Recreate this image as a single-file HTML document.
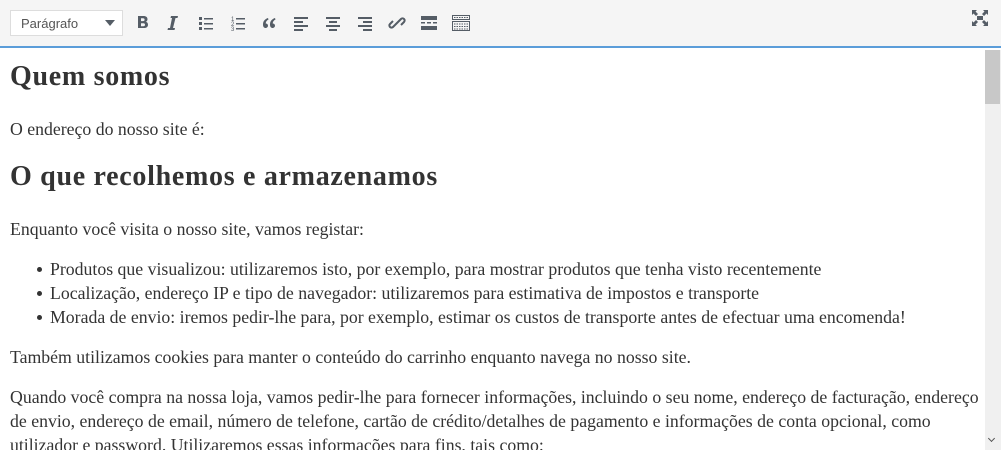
<!DOCTYPE html>
<html><head><meta charset="utf-8"><style>
*{margin:0;padding:0;box-sizing:border-box}
body{width:1001px;height:472px;background:#fff;overflow:hidden;position:relative;font-family:"Liberation Serif",serif;color:#333}
.tb{position:absolute;left:0;top:0;width:1001px;height:48px;background:#f5f5f5;border-bottom:2px solid #5b9dd9}
.sel{position:absolute;left:10px;top:10px;width:113px;height:26px;background:#fff;border:1px solid #ddd;font:13px "Liberation Sans",sans-serif;color:#555;padding:5px 0 0 10px}
.sel:after{content:"";position:absolute;right:7px;top:9px;border:5px solid transparent;border-top:6px solid #555d66;border-bottom:0}
.ic{position:absolute;top:13px}
.c{position:absolute;left:10px;top:50px;width:975px;white-space:nowrap}
h2{position:absolute;left:0;font-size:28px;font-weight:bold;letter-spacing:0.7px}
p,li{position:absolute;font-size:17.75px;line-height:24px}
li{list-style:none;left:40px}
li:before{content:"";position:absolute;left:-13px;top:10px;width:5px;height:5px;border-radius:50%;background:#333}
.sb{position:absolute;left:985px;top:50px;width:16px;height:400px;background:#f0f0f0}
.th{position:absolute;left:985px;top:50px;width:15px;height:54px;background:#c8c8c8}
</style></head><body>
<div class="tb">
<div class="sel">Parágrafo</div>
<svg class="ic" style="left:133px" width="20" height="20" viewBox="0 0 20 20" fill="#555d66"><path d="M5 3h5.5c2.5 0 4 1.2 4 3.2 0 1.3-.7 2.2-1.8 2.6 1.5.3 2.300 1.4 2.3 2.9 0 2.2-1.7 3.3-4.3 3.3H5zm3 2.3v2.8h2c1 0 1.6-.5 1.6-1.4s-.6-1.4-1.6-1.4zm0 5v3h2.3c1.1 0 1.7-.5 1.7-1.5s-.6-1.5-1.7-1.5z"/></svg>
<svg class="ic" style="left:163px" width="20" height="20" viewBox="0 0 20 20" fill="#555d66"><path d="M8 3h7l-.5 2h-2l-2.5 10h2l-.5 2h-7l.5-2h2L9 5H7.5z"/></svg>
<svg class="ic" style="left:196px" width="20" height="20" viewBox="0 0 20 20" fill="#555d66"><rect x="3" y="4" width="3" height="3"/><rect x="3" y="9" width="3" height="3"/><rect x="3" y="14" width="3" height="3"/><rect x="8" y="5" width="9" height="1.5"/><rect x="8" y="10" width="9" height="1.5"/><rect x="8" y="15" width="9" height="1.5"/></svg>
<svg class="ic" style="left:228px" width="20" height="20" viewBox="0 0 20 20" fill="#555d66"><text x="3" y="8" font-size="6" font-family="Liberation Sans">1</text><text x="3" y="13" font-size="6" font-family="Liberation Sans">2</text><text x="3" y="18" font-size="6" font-family="Liberation Sans">3</text><rect x="8" y="5" width="9" height="1.5"/><rect x="8" y="10" width="9" height="1.5"/><rect x="8" y="15" width="9" height="1.5"/></svg>
<svg class="ic" style="left:259px" width="20" height="20" viewBox="0 0 20 20" fill="#555d66"><path d="M9 5C6 6 4 8 4 11.5 4 14 5.3 15 6.5 15S9 14 9 12.7 8 10.5 6.7 10.5c.2-2 1-3 2.8-4zM16 5c-3 1-5 3-5 6.5 0 2.5 1.3 3.5 2.5 3.5S16 14 16 12.7 15 10.5 13.7 10.5c.2-2 1-3 2.8-4z"/></svg>
<svg class="ic" style="left:291px" width="20" height="20" viewBox="0 0 20 20" fill="#555d66"><rect x="3" y="4" width="14" height="2"/><rect x="3" y="8" width="9" height="2"/><rect x="3" y="12" width="14" height="2"/><rect x="3" y="16" width="9" height="2"/></svg>
<svg class="ic" style="left:323px" width="20" height="20" viewBox="0 0 20 20" fill="#555d66"><rect x="3" y="4" width="14" height="2"/><rect x="6" y="8" width="8" height="2"/><rect x="3" y="12" width="14" height="2"/><rect x="6" y="16" width="8" height="2"/></svg>
<svg class="ic" style="left:355px" width="20" height="20" viewBox="0 0 20 20" fill="#555d66"><rect x="3" y="4" width="14" height="2"/><rect x="8" y="8" width="9" height="2"/><rect x="3" y="12" width="14" height="2"/><rect x="8" y="16" width="9" height="2"/></svg>
<svg class="ic" style="left:387px" width="20" height="20" viewBox="0 0 20 20" fill="none" stroke="#555d66" stroke-width="2"><path d="M9 11l-3 3a2 2 0 0 1-3-3l3-3M11 9l3-3a2 2 0 0 1 3 3l-3 3M8 12l4-4"/></svg>
<svg class="ic" style="left:419px" width="20" height="20" viewBox="0 0 20 20" fill="#555d66"><rect x="2" y="3" width="16" height="4"/><rect x="2" y="9" width="4" height="1.5"/><rect x="8" y="9" width="4" height="1.5"/><rect x="14" y="9" width="4" height="1.5"/><rect x="2" y="13" width="16" height="4"/></svg>
<svg class="ic" style="left:451px" width="20" height="20" viewBox="0 0 20 20" fill="none" stroke="#555d66" stroke-width="1"><rect x="1.5" y="2.5" width="17" height="4"/><rect x="1.5" y="8.5" width="17" height="9"/><path d="M3 4.5h14M3 11h14M3 13.5h14M3 16h14" stroke-dasharray="1.5 1"/></svg>
<svg style="position:absolute;left:971px;top:9px" width="18" height="18" viewBox="0 0 18 18" fill="#555d66"><path d="M1 1h5L4.5 2.5 7 5 5 7 2.5 4.5 1 6zM17 1v5l-1.5-1.5L13 7l-2-2 2.5-2.5L12 1zM1 17v-5l1.5 1.5L5 11l2 2-2.5 2.5L6 17zM17 17h-5l1.5-1.5L11 13l2-2 2.5 2.5L17 12z"/><rect x="6" y="7" width="6" height="4"/></svg>
</div>
<div class="c">
<h2 style="top:11px">Quem somos</h2>
<p style="top:67px;left:0">O endereço do nosso site é:</p>
<h2 style="top:111px">O que recolhemos e armazenamos</h2>
<p style="top:167px;left:0">Enquanto você visita o nosso site, vamos registar:</p>
<ul>
<li style="top:207px">Produtos que visualizou: utilizaremos isto, por exemplo, para mostrar produtos que tenha visto recentemente</li>
<li style="top:231px">Localização, endereço IP e tipo de navegador: utilizaremos para estimativa de impostos e transporte</li>
<li style="top:255px">Morada de envio: iremos pedir-lhe para, por exemplo, estimar os custos de transporte antes de efectuar uma encomenda!</li>
</ul>
<p style="top:295px;left:0">Também utilizamos cookies para manter o conteúdo do carrinho enquanto navega no nosso site.</p>
<p style="top:335px;left:0">Quando você compra na nossa loja, vamos pedir-lhe para fornecer informações, incluindo o seu nome, endereço de facturação, endereço<br>de envio, endereço de email, número de telefone, cartão de crédito/detalhes de pagamento e informações de conta opcional, como<br>utilizador e password. Utilizaremos essas informações para fins, tais como:</p>
</div>
<div style="position:absolute;left:0;top:450px;width:1001px;height:22px;background:#fff"></div>
<div class="sb"></div><div class="th"></div>
<div style="position:absolute;left:989px;top:436px;width:5px;height:5px;border-right:1.5px solid #555;border-bottom:1.5px solid #555;transform:rotate(45deg)"></div>
</body></html>
